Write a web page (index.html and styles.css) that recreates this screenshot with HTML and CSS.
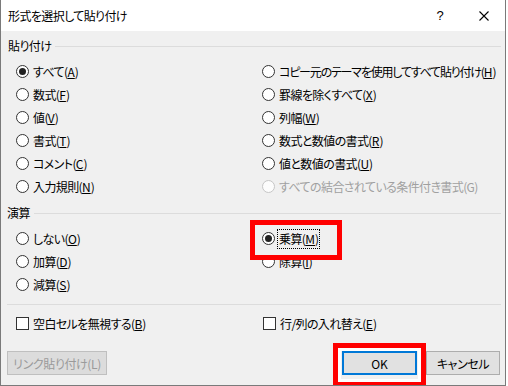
FILE: index.html
```html
<!DOCTYPE html>
<html lang="ja">
<head>
<meta charset="utf-8">
<title>形式を選択して貼り付け</title>
<link rel="stylesheet" href="styles.css">
</head>
<body>
<div class="dialog">
  <div class="titlebar">
    <span class="title">形式を選択して貼り付け</span>
    <span class="help">?</span>
    <span class="close"><svg width="10" height="10" viewBox="0 0 10 10"><path d="M0.5 0.5L9.5 9.5M9.5 0.5L0.5 9.5" stroke="#000" stroke-width="1.1" fill="none"/></svg></span>
  </div>
  <div class="content">
    <div class="group-head"><span>貼り付け</span><i class="rule"></i></div>
    <div class="grid">
      <div class="opt"><span class="radio checked"></span><span>すべて(<u>A</u>)</span></div>
      <div class="opt"><span class="radio"></span><span class="tight">コピー元のテーマを使用してすべて貼り付け(<u>H</u>)</span></div>
      <div class="opt"><span class="radio"></span><span>数式(<u>F</u>)</span></div>
      <div class="opt"><span class="radio"></span><span>罫線を除くすべて(<u>X</u>)</span></div>
      <div class="opt"><span class="radio"></span><span>値(<u>V</u>)</span></div>
      <div class="opt"><span class="radio"></span><span>列幅(<u>W</u>)</span></div>
      <div class="opt"><span class="radio"></span><span>書式(<u>T</u>)</span></div>
      <div class="opt"><span class="radio"></span><span>数式と数値の書式(<u>R</u>)</span></div>
      <div class="opt"><span class="radio"></span><span>コメント(<u>C</u>)</span></div>
      <div class="opt"><span class="radio"></span><span>値と数値の書式(<u>U</u>)</span></div>
      <div class="opt"><span class="radio"></span><span>入力規則(<u>N</u>)</span></div>
      <div class="opt disabled"><span class="radio"></span><span>すべての結合されている条件付き書式(G)</span></div>
    </div>
    <div class="group-head second"><span>演算</span><i class="rule"></i></div>
    <div class="grid">
      <div class="opt"><span class="radio"></span><span>しない(<u>O</u>)</span></div>
      <div class="opt"><span class="radio checked"></span><span class="focus">乗算(<u>M</u>)</span></div>
      <div class="opt"><span class="radio"></span><span>加算(<u>D</u>)</span></div>
      <div class="opt"><span class="radio"></span><span>除算(<u>I</u>)</span></div>
      <div class="opt"><span class="radio"></span><span>減算(<u>S</u>)</span></div>
      <div class="opt"></div>
    </div>
    <div class="separator"></div>
    <div class="grid checks">
      <div class="opt"><span class="check"></span><span>空白セルを無視する(<u>B</u>)</span></div>
      <div class="opt"><span class="check"></span><span>行/列の入れ替え(<u>E</u>)</span></div>
    </div>
    <div class="buttons">
      <button class="btn link" disabled>リンク貼り付け(L)</button>
      <button class="btn ok">OK</button>
      <button class="btn cancel">キャンセル</button>
    </div>
  </div>
  <div class="mark mark-op"></div>
  <div class="mark mark-ok"></div>
</div>
</body>
</html>
```

FILE: styles.css
```css
html, body {
  margin: 0;
  padding: 0;
  background: #ffffff;
}
body {
  font-family: "Noto Sans CJK JP", "Noto Sans", sans-serif;
  font-size: 12px;
  color: #000;
  font-feature-settings: "palt";
  letter-spacing: -0.6px;
}
.dialog {
  position: relative;
  box-sizing: border-box;
  width: 506px;
  height: 386px;
  background: #f0f0f0;
  border: 1px solid #7a7a7a;
  border-top: none;
  overflow: hidden;
}
.titlebar {
  height: 31px;
  background: #ffffff;
  display: flex;
  align-items: center;
  padding-left: 7px;
}
.title {
  flex: 1;
  font-size: 12px;
  line-height: 14px;
}
.help {
  width: 46px;
  text-align: center;
  font-family: "Liberation Sans", sans-serif;
  font-size: 13px;
  letter-spacing: 0;
}
.close {
  width: 42px;
  display: flex;
  justify-content: center;
  align-items: center;
}
.content {
  padding-top: 8px;
}
.group-head {
  display: flex;
  align-items: center;
  height: 14px;
  padding-left: 7px;
  padding-right: 4px;
  line-height: 14px;
}
.group-head.second {
  margin-top: 8px;
  padding-left: 6px;
}
.rule {
  flex: 1;
  height: 1px;
  background: #dcdcdc;
  margin-left: 4px;
}
.grid {
  display: grid;
  grid-template-columns: 246px 1fr;
  grid-auto-rows: 23px;
  margin-top: 7px;
  margin-left: 15px;
}
.opt {
  display: flex;
  align-items: center;
  white-space: nowrap;
}
.opt u {
  text-underline-offset: 1px;
  letter-spacing: 0;
}
.tight {
  letter-spacing: -1.2px;
}
.radio {
  box-sizing: border-box;
  width: 13px;
  height: 13px;
  border: 1px solid #333;
  border-radius: 50%;
  background: #fff;
  margin-right: 4px;
  display: flex;
  align-items: center;
  justify-content: center;
  flex: none;
}
.radio.checked::after {
  content: "";
  width: 7px;
  height: 7px;
  border-radius: 50%;
  background: #222;
}
.disabled {
  color: #a0a0a0;
}
.disabled .radio {
  border-color: #c6c6c6;
  background: #fcfcfc;
}
.focus {
  outline: 1px dotted #000;
  outline-offset: 0;
  padding: 1px 1px;
  margin-left: -1px;
  line-height: 16px;
}
.separator {
  height: 1px;
  background: #dcdcdc;
  margin: 8px 4px 0 6px;
}
.checks {
  margin-top: 7px;
  grid-template-columns: 247px 1fr;
}
.check {
  box-sizing: border-box;
  width: 13px;
  height: 13px;
  border: 1px solid #333;
  background: #fff;
  margin-right: 4px;
  flex: none;
}
.buttons {
  display: flex;
  align-items: center;
  margin-top: 16px;
  padding-left: 6px;
  padding-right: 5px;
}
.btn {
  box-sizing: border-box;
  height: 24px;
  font-family: inherit;
  font-size: 12px;
  font-feature-settings: "palt";
  letter-spacing: -0.4px;
  color: #000;
  background: #e1e1e1;
  border: 1px solid #adadad;
  padding: 0;
  margin: 0;
}
.link {
  width: 100px;
  color: #9a9a9a;
  background: #dcdcdc;
  border-color: #bfbfbf;
}
.ok {
  width: 75px;
  margin-left: auto;
  border: 2px solid #0078d7;
  letter-spacing: 0;
}
.cancel {
  width: 74px;
  margin-left: 9px;
}
.mark {
  position: absolute;
  box-sizing: border-box;
  border: 5px solid #ff0000;
}
.mark-op {
  left: 249px;
  top: 220px;
  width: 92px;
  height: 40px;
}
.mark-ok {
  left: 332px;
  top: 343px;
  width: 93px;
  height: 43px;
  border-bottom-width: 4px;
  box-shadow: inset 0 0 0 3px #ffffff;
}
```
